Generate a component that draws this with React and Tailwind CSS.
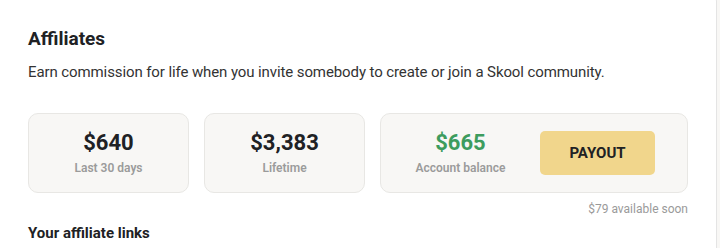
import React from "react";

const stats = [
  { amount: "$640", label: "Last 30 days" },
  { amount: "$3,383", label: "Lifetime" },
];

function StatCard({ amount, label }) {
  return (
    <div className="w-[161px] h-[80px] rounded-[10px] border border-[#e8e7e4] bg-[#f8f7f5] flex flex-col items-center justify-center">
      <div className="text-[22px] leading-[26px] font-bold text-[#202124]">{amount}</div>
      <div className="text-[12px] leading-[16px] font-semibold text-[#9b9b9b] mt-[4px]">{label}</div>
    </div>
  );
}

export default function App() {
  return (
    <div className="w-[720px] h-[248px] bg-[#f8f7f5] overflow-hidden" style={{ fontFamily: "Roboto, 'Liberation Sans', sans-serif" }}>
      <div className="w-[717px] h-[260px] -mt-[8px] bg-white border-r border-t border-[#e4e4e4] rounded-tr-[10px] pt-[7px]">
        <div className="pl-[28px] pt-[27px]">
          <h1 className="text-[19px] leading-[24px] font-bold text-[#202124]">Affiliates</h1>
          <p className="text-[15px] leading-[20px] tracking-[-0.1px] text-[#333333] mt-[11px]">
            Earn commission for life when you invite somebody to create or join a Skool community.
          </p>

          <div className="flex gap-[15px] mt-[31px] w-[660px]">
            {stats.map((s) => (
              <StatCard key={s.label} {...s} />
            ))}
            <div className="flex-1 h-[80px] rounded-[10px] border border-[#e8e7e4] bg-[#f8f7f5] flex items-center">
              <div className="flex-1 flex flex-col items-center">
                <div className="text-[22px] leading-[26px] font-bold text-[#3d9c5e]">$665</div>
                <div className="text-[12px] leading-[16px] font-semibold text-[#9b9b9b] mt-[4px]">Account balance</div>
              </div>
              <button className="w-[115px] h-[44px] mr-[32px] rounded-[5px] bg-[#f1d68c] text-[15px] font-bold text-[#202124]">
                PAYOUT
              </button>
            </div>
          </div>

          <div className="w-[660px] text-right text-[12px] leading-[16px] text-[#9a9a9a] mt-[8px]">
            $79 available soon
          </div>

          <h2 className="text-[15px] leading-[20px] font-bold text-[#202124] mt-[6px]">Your affiliate links</h2>
        </div>
      </div>
    </div>
  );
}
